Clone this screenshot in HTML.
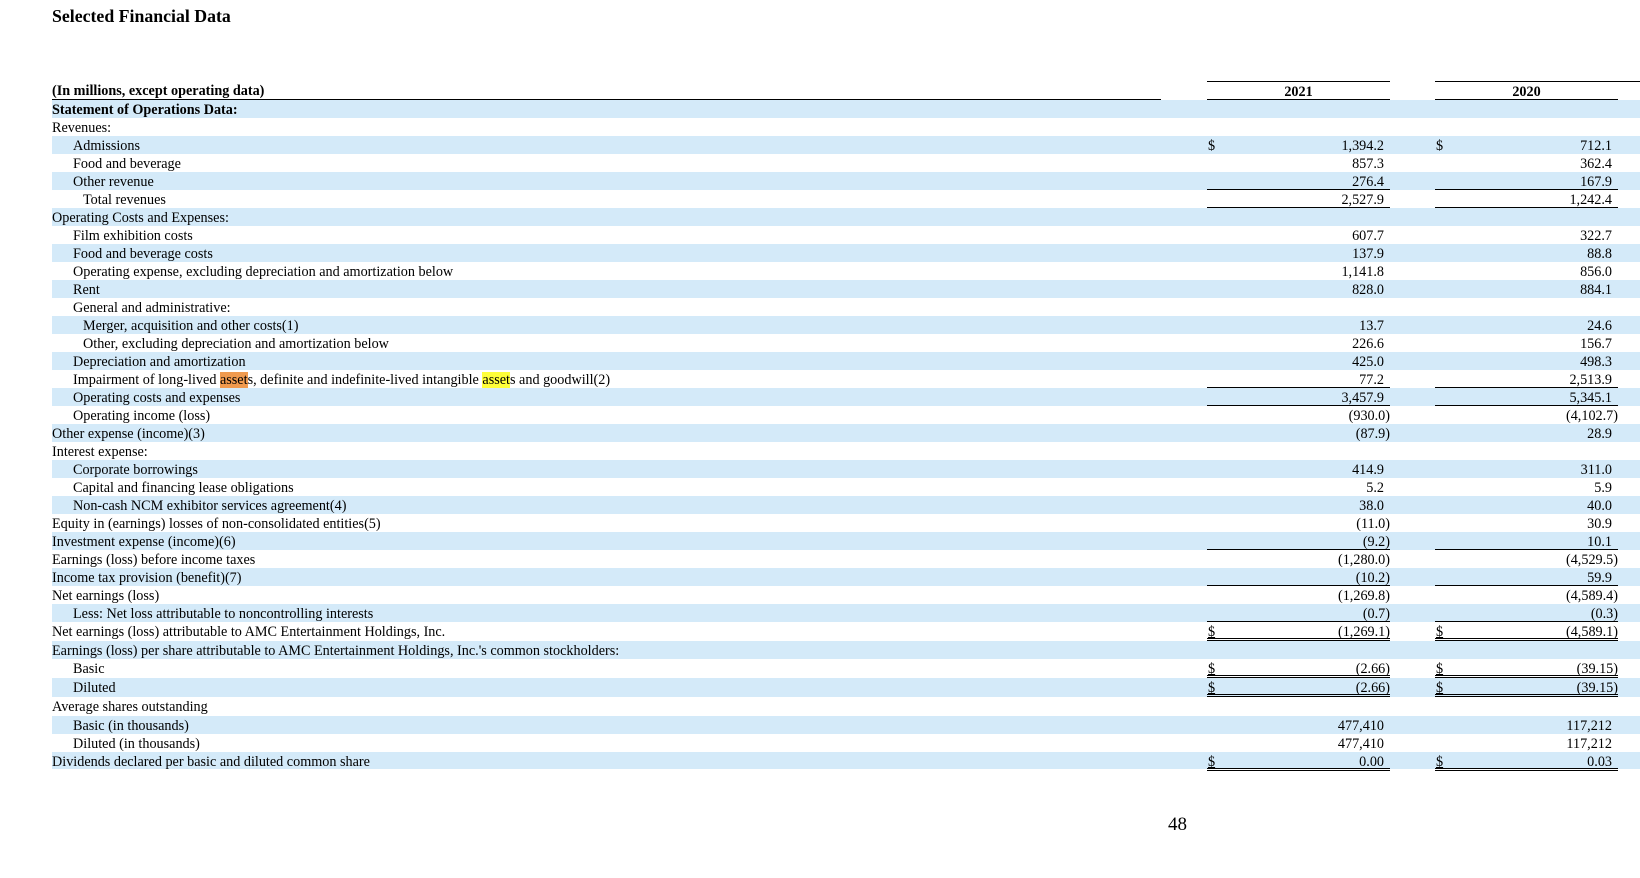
<!DOCTYPE html>
<html><head><meta charset="utf-8">
<style>
*{margin:0;padding:0;box-sizing:border-box}
body{width:1640px;height:878px;background:#fff;position:relative;overflow:hidden;font-family:"Liberation Serif","Times New Roman",serif;font-size:14.2px;color:#000}
.t{position:absolute;left:52px;top:6px;font-weight:bold;font-size:17.8px}
.r{position:absolute;left:52px;width:1588px;height:18px;line-height:21px;white-space:nowrap}
.b{background:#d4eaf9}
.l{position:absolute;left:0;top:0}
.c{position:absolute;top:0;height:18px;text-align:right}
.c1{left:1155px;width:183px}
.c2{left:1383px;width:183px}
.n{padding-right:6px}
.p{padding-right:0}
.u{border-bottom:1px solid #000}
.d{border-bottom:3px double #000;height:19px}
.s{position:absolute;left:1px;top:0}
.su{text-decoration:underline}
.hdr{position:absolute;top:81px;height:19px;line-height:21px;font-weight:bold;text-align:center;border-top:1px solid #000;border-bottom:1px solid #000}
.o{background:#f09a4e}.y{background:#ffff3a}
</style></head><body>
<div class="t">Selected Financial Data</div>
<div style="position:absolute;left:52px;top:81px;width:1109px;height:19px;line-height:21px;font-weight:bold;border-bottom:1px solid #000">(In millions, except operating data)</div>
<div class="hdr" style="left:1207px;width:183px">2021</div>
<div class="hdr" style="left:1435px;width:205px;border-bottom:none"><span style="display:block;width:183px;border-bottom:1px solid #000;height:18px">2020</span></div>

<div class="r b" style="top:100px"><span class="l" style="font-weight:bold">Statement of Operations Data:</span></div>
<div class="r" style="top:118px"><span class="l">Revenues:</span></div>
<div class="r b" style="top:136px"><span class="l" style="left:21px">Admissions</span><span class="c c1 n"><span class="s">$</span>1,394.2</span><span class="c c2 n"><span class="s">$</span>712.1</span></div>
<div class="r" style="top:154px"><span class="l" style="left:21px">Food and beverage</span><span class="c c1 n">857.3</span><span class="c c2 n">362.4</span></div>
<div class="r b" style="top:172px"><span class="l" style="left:21px">Other revenue</span><span class="c c1 n u">276.4</span><span class="c c2 n u">167.9</span></div>
<div class="r" style="top:190px"><span class="l" style="left:31px">Total revenues</span><span class="c c1 n u">2,527.9</span><span class="c c2 n u">1,242.4</span></div>
<div class="r b" style="top:208px"><span class="l">Operating Costs and Expenses:</span></div>
<div class="r" style="top:226px"><span class="l" style="left:21px">Film exhibition costs</span><span class="c c1 n">607.7</span><span class="c c2 n">322.7</span></div>
<div class="r b" style="top:244px"><span class="l" style="left:21px">Food and beverage costs</span><span class="c c1 n">137.9</span><span class="c c2 n">88.8</span></div>
<div class="r" style="top:262px"><span class="l" style="left:21px">Operating expense, excluding depreciation and amortization below</span><span class="c c1 n">1,141.8</span><span class="c c2 n">856.0</span></div>
<div class="r b" style="top:280px"><span class="l" style="left:21px">Rent</span><span class="c c1 n">828.0</span><span class="c c2 n">884.1</span></div>
<div class="r" style="top:298px"><span class="l" style="left:21px">General and administrative:</span></div>
<div class="r b" style="top:316px"><span class="l" style="left:31px">Merger, acquisition and other costs(1)</span><span class="c c1 n">13.7</span><span class="c c2 n">24.6</span></div>
<div class="r" style="top:334px"><span class="l" style="left:31px">Other, excluding depreciation and amortization below</span><span class="c c1 n">226.6</span><span class="c c2 n">156.7</span></div>
<div class="r b" style="top:352px"><span class="l" style="left:21px">Depreciation and amortization</span><span class="c c1 n">425.0</span><span class="c c2 n">498.3</span></div>
<div class="r" style="top:370px"><span class="l" style="left:21px">Impairment of long-lived <span class="o">asset</span>s, definite and indefinite-lived intangible <span class="y">asset</span>s and goodwill(2)</span><span class="c c1 n u">77.2</span><span class="c c2 n u">2,513.9</span></div>
<div class="r b" style="top:388px"><span class="l" style="left:21px">Operating costs and expenses</span><span class="c c1 n u">3,457.9</span><span class="c c2 n u">5,345.1</span></div>
<div class="r" style="top:406px"><span class="l" style="left:21px">Operating income (loss)</span><span class="c c1 p">(930.0)</span><span class="c c2 p">(4,102.7)</span></div>
<div class="r b" style="top:424px"><span class="l">Other expense (income)(3)</span><span class="c c1 p">(87.9)</span><span class="c c2 n">28.9</span></div>
<div class="r" style="top:442px"><span class="l">Interest expense:</span></div>
<div class="r b" style="top:460px"><span class="l" style="left:21px">Corporate borrowings</span><span class="c c1 n">414.9</span><span class="c c2 n">311.0</span></div>
<div class="r" style="top:478px"><span class="l" style="left:21px">Capital and financing lease obligations</span><span class="c c1 n">5.2</span><span class="c c2 n">5.9</span></div>
<div class="r b" style="top:496px"><span class="l" style="left:21px">Non-cash NCM exhibitor services agreement(4)</span><span class="c c1 n">38.0</span><span class="c c2 n">40.0</span></div>
<div class="r" style="top:514px"><span class="l">Equity in (earnings) losses of non-consolidated entities(5)</span><span class="c c1 p">(11.0)</span><span class="c c2 n">30.9</span></div>
<div class="r b" style="top:532px"><span class="l">Investment expense (income)(6)</span><span class="c c1 p u">(9.2)</span><span class="c c2 n u">10.1</span></div>
<div class="r" style="top:550px"><span class="l">Earnings (loss) before income taxes</span><span class="c c1 p">(1,280.0)</span><span class="c c2 p">(4,529.5)</span></div>
<div class="r b" style="top:568px"><span class="l">Income tax provision (benefit)(7)</span><span class="c c1 p u">(10.2)</span><span class="c c2 n u">59.9</span></div>
<div class="r" style="top:586px"><span class="l">Net earnings (loss)</span><span class="c c1 p">(1,269.8)</span><span class="c c2 p">(4,589.4)</span></div>
<div class="r b" style="top:604px"><span class="l" style="left:21px">Less: Net loss attributable to noncontrolling interests</span><span class="c c1 p u">(0.7)</span><span class="c c2 p u">(0.3)</span></div>
<div class="r" style="top:622px;height:19px"><span class="l">Net earnings (loss) attributable to AMC Entertainment Holdings, Inc.</span><span class="c c1 p d"><span class="s su">$</span>(1,269.1)</span><span class="c c2 p d"><span class="s su">$</span>(4,589.1)</span></div>
<div class="r b" style="top:641px"><span class="l">Earnings (loss) per share attributable to AMC Entertainment Holdings, Inc.'s common stockholders:</span></div>
<div class="r" style="top:659px;height:19px"><span class="l" style="left:21px">Basic</span><span class="c c1 p d"><span class="s su">$</span>(2.66)</span><span class="c c2 p d"><span class="s su">$</span>(39.15)</span></div>
<div class="r b" style="top:678px;height:19px"><span class="l" style="left:21px">Diluted</span><span class="c c1 p d"><span class="s su">$</span>(2.66)</span><span class="c c2 p d"><span class="s su">$</span>(39.15)</span></div>
<div class="r" style="top:697px;height:19px"><span class="l">Average shares outstanding</span></div>
<div class="r b" style="top:716px"><span class="l" style="left:21px">Basic (in thousands)</span><span class="c c1 n">477,410</span><span class="c c2 n">117,212</span></div>
<div class="r" style="top:734px"><span class="l" style="left:21px">Diluted (in thousands)</span><span class="c c1 n">477,410</span><span class="c c2 n">117,212</span></div>
<div class="r b" style="top:752px;height:17px"><span class="l">Dividends declared per basic and diluted common share</span><span class="c c1 n d"><span class="s su">$</span>0.00</span><span class="c c2 n d"><span class="s su">$</span>0.03</span></div>

<div style="position:absolute;left:1168px;top:814px;font-size:19px">48</div>
</body></html>
